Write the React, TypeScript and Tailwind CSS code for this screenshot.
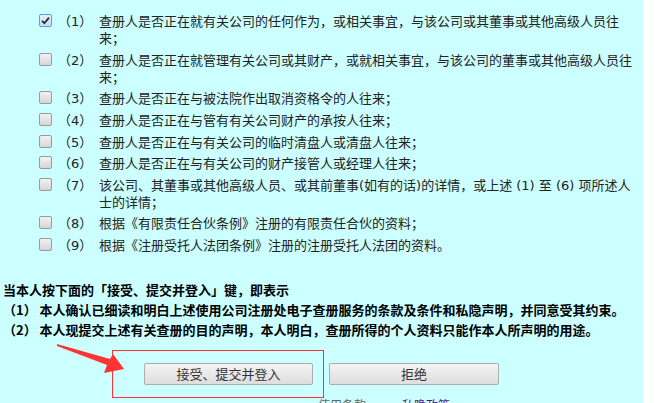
import React from "react";

const items: string[] = [
  "查册人是否正在就有关公司的任何作为，或相关事宜，与该公司或其董事或其他高级人员往来；",
  "查册人是否正在就管理有关公司或其财产，或就相关事宜，与该公司的董事或其他高级人员往来；",
  "查册人是否正在与被法院作出取消资格令的人往来；",
  "查册人是否正在与管有有关公司财产的承按人往来；",
  "查册人是否正在与有关公司的临时清盘人或清盘人往来；",
  "查册人是否正在与有关公司的财产接管人或经理人往来；",
  "该公司、其董事或其他高级人员、或其前董事(如有的话)的详情，或上述 (1) 至 (6) 项所述人士的详情；",
  "根据《有限责任合伙条例》注册的有限责任合伙的资料；",
  "根据《注册受托人法团条例》注册的注册受托人法团的资料。",
];

function Checkbox({ checked }: { checked?: boolean }) {
  if (checked) {
    return (
      <div className="w-[13px] h-[13px] rounded-[2px] border border-[#5b9de1] bg-gradient-to-b from-[#e6f1fc] to-[#c4dcf5] flex items-center justify-center">
        <svg width="9" height="9" viewBox="0 0 9 9">
          <path d="M1 4.8 L3.4 7.2 L8 1.6" fill="none" stroke="#2b2b2b" strokeWidth="1.8" />
        </svg>
      </div>
    );
  }
  return (
    <div className="w-[13px] h-[13px] rounded-[2px] border border-[#9a9a9a] bg-gradient-to-b from-[#f2f2f2] to-[#d6d6d6]" />
  );
}

export default function App() {
  return (
    <div className="min-h-[403px] bg-white">
      <div
        className="relative w-[643px] min-h-[403px] bg-[#ccffff] text-[13px] text-[#222]"
        style={{ fontFamily: '"Noto Sans CJK SC", "Noto Sans", sans-serif' }}
      >
        <div
          className="pt-[11px] flex flex-col"
          style={{ fontFamily: '"DejaVu Sans", "Noto Sans CJK SC", sans-serif' }}
        >
          {items.map((t, i) => (
            <div key={i} className="flex py-[2.3px]">
              <div className="w-[58px] shrink-0 flex justify-end pr-[6px] pt-[1px]">
                <Checkbox checked={i === 0} />
              </div>
              <div className="w-[41px] shrink-0 leading-[17px]">（{i + 1}）</div>
              <div className="w-[540px] leading-[17px]">{t}</div>
            </div>
          ))}
        </div>

        <div className="mt-[24px] pl-[3px] font-bold text-black leading-[20px]">
          <div>当本人按下面的「接受、提交并登入」键，即表示</div>
          <div>（1） 本人确认已细读和明白上述使用公司注册处电子查册服务的条款及条件和私隐声明，并同意受其约束。</div>
          <div>（2） 本人现提交上述有关查册的目的声明，本人明白，查册所得的个人资料只能作本人所声明的用途。</div>
        </div>

        <div className="mt-[23px] flex justify-center gap-[16px]">
          <button className="w-[169px] h-[22px] rounded-[2px] border border-[#adadad] bg-gradient-to-b from-[#f4f4f4] to-[#dedede] text-[13px] text-[#333] leading-[20px]">
            接受、提交并登入
          </button>
          <button className="w-[170px] h-[22px] rounded-[2px] border border-[#adadad] bg-gradient-to-b from-[#f4f4f4] to-[#dedede] text-[13px] text-[#333] leading-[20px]">
            拒绝
          </button>
        </div>

        <div className="mt-[12px] flex gap-[36px] pl-[318px] text-[12px] leading-[16px]">
          <span className="text-[#666]">使用条款</span>
          <span className="text-[#551a8b]">私隐政策</span>
        </div>

        {/* annotation overlay */}
        <div className="absolute left-[112px] top-[350px] w-[212px] h-[48px] border border-[#ff3333]" />
        <svg className="absolute left-0 top-0" width="643" height="403" viewBox="0 0 643 403">
          <polygon
            points="57,344 110,359 113,354 124,369 104,373 107,365 57,346"
            fill="#ff3333"
          />
        </svg>
      </div>
    </div>
  );
}
